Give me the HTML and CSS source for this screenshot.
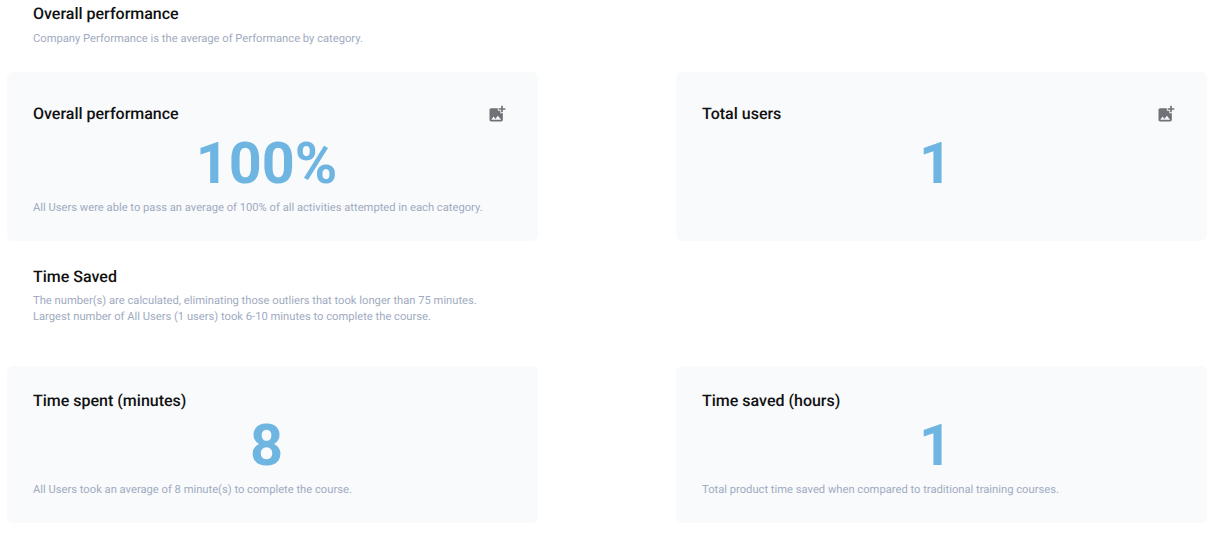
FILE: index.html

```html
<!DOCTYPE html>
<html lang="en">

<head>
    <meta charset="UTF-8">
    <title>Overall performance</title>
    <link rel="stylesheet" href="styles.css">
</head>

<body>
    <div class="heading first">
        <h2>Overall performance</h2>
        <p>Company Performance is the average of Performance by category.</p>
    </div>

    <div class="cards">
        <div class="card tall">
            <div class="card-top">
                <h3>Overall performance</h3>
                <svg class="add-image" viewBox="0 0 24 24"><path d="M19 7v2.99s-1.990.01-2 0V7h-3s.01-1.990 0-2h3V2h2v3h3v2h-3zm-3 4V8h-3V5H5c-1.100 0-2 .9-2 2v12c0 1.100.9 2 2 2h12c1.100 0 2-.9 2-2v-8h-3zM5 19l3-4 2 3 3-4 4 5H5z"/></svg>
            </div>
            <div class="value">100%</div>
            <p>All Users were able to pass an average of 100% of all activities attempted in each category.</p>
        </div>
        <div class="card tall">
            <div class="card-top">
                <h3>Total users</h3>
                <svg class="add-image" viewBox="0 0 24 24"><path d="M19 7v2.99s-1.990.01-2 0V7h-3s.01-1.990 0-2h3V2h2v3h3v2h-3zm-3 4V8h-3V5H5c-1.100 0-2 .9-2 2v12c0 1.100.9 2 2 2h12c1.100 0 2-.9 2-2v-8h-3zM5 19l3-4 2 3 3-4 4 5H5z"/></svg>
            </div>
            <div class="value">1</div>
        </div>
    </div>

    <div class="heading second">
        <h2>Time Saved</h2>
        <p>The number(s) are calculated, eliminating those outliers that took longer than 75 minutes.<br>Largest number of All Users (1 users) took 6-10 minutes to complete the course.</p>
    </div>

    <div class="cards">
        <div class="card short">
            <div class="card-top">
                <h3>Time spent (minutes)</h3>
            </div>
            <div class="value">8</div>
            <p>All Users took an average of 8 minute(s) to complete the course.</p>
        </div>
        <div class="card short">
            <div class="card-top">
                <h3>Time saved (hours)</h3>
            </div>
            <div class="value">1</div>
            <p>Total product time saved when compared to traditional training courses.</p>
        </div>
    </div>
</body>

</html>
```

FILE: styles.css

```css
body {
    margin: 0;
    font-family: Roboto, "Liberation Sans", sans-serif;
    text-rendering: geometricPrecision;
    background: #fff;
    overflow: hidden;
}

h2,
h3 {
    margin: 0;
    font-size: 16px;
    font-weight: 500;
    line-height: 20px;
    color: #111;
}

p {
    margin: 0;
    font-size: 11.2px;
    line-height: 16px;
    color: #a0abc1;
}

.heading {
    padding-left: 33px;
}

.heading.first {
    padding-top: 4px;
    height: 72px;
    box-sizing: border-box;
}

.heading.first p {
    margin-top: 7px;
}

.heading.second {
    height: 125px;
    padding-top: 26px;
    box-sizing: border-box;
}

.heading.second p {
    margin-top: 6px;
}

.cards {
    display: flex;
    gap: 138px;
    padding-left: 7px;
}

.card {
    width: 531px;
    box-sizing: border-box;
    padding: 32px 26px 0;
    background: #f9fafc;
    border-radius: 6px;
}

.card.tall {
    height: 169px;
}

.card.short {
    height: 157px;
    padding-top: 25px;
}

.card-top {
    display: flex;
    justify-content: space-between;
    align-items: center;
    height: 20px;
}

.add-image {
    width: 20px;
    height: 20px;
    margin-right: 5px;
    fill: #6f7277;
}

.value {
    height: 70px;
    margin: 6px 12px 0 0;
    font-size: 57.6px;
    font-weight: 700;
    line-height: 70px;
    text-align: center;
    color: #6fb5e2;
}

.short .value {
    margin-top: 1px;
}
```
